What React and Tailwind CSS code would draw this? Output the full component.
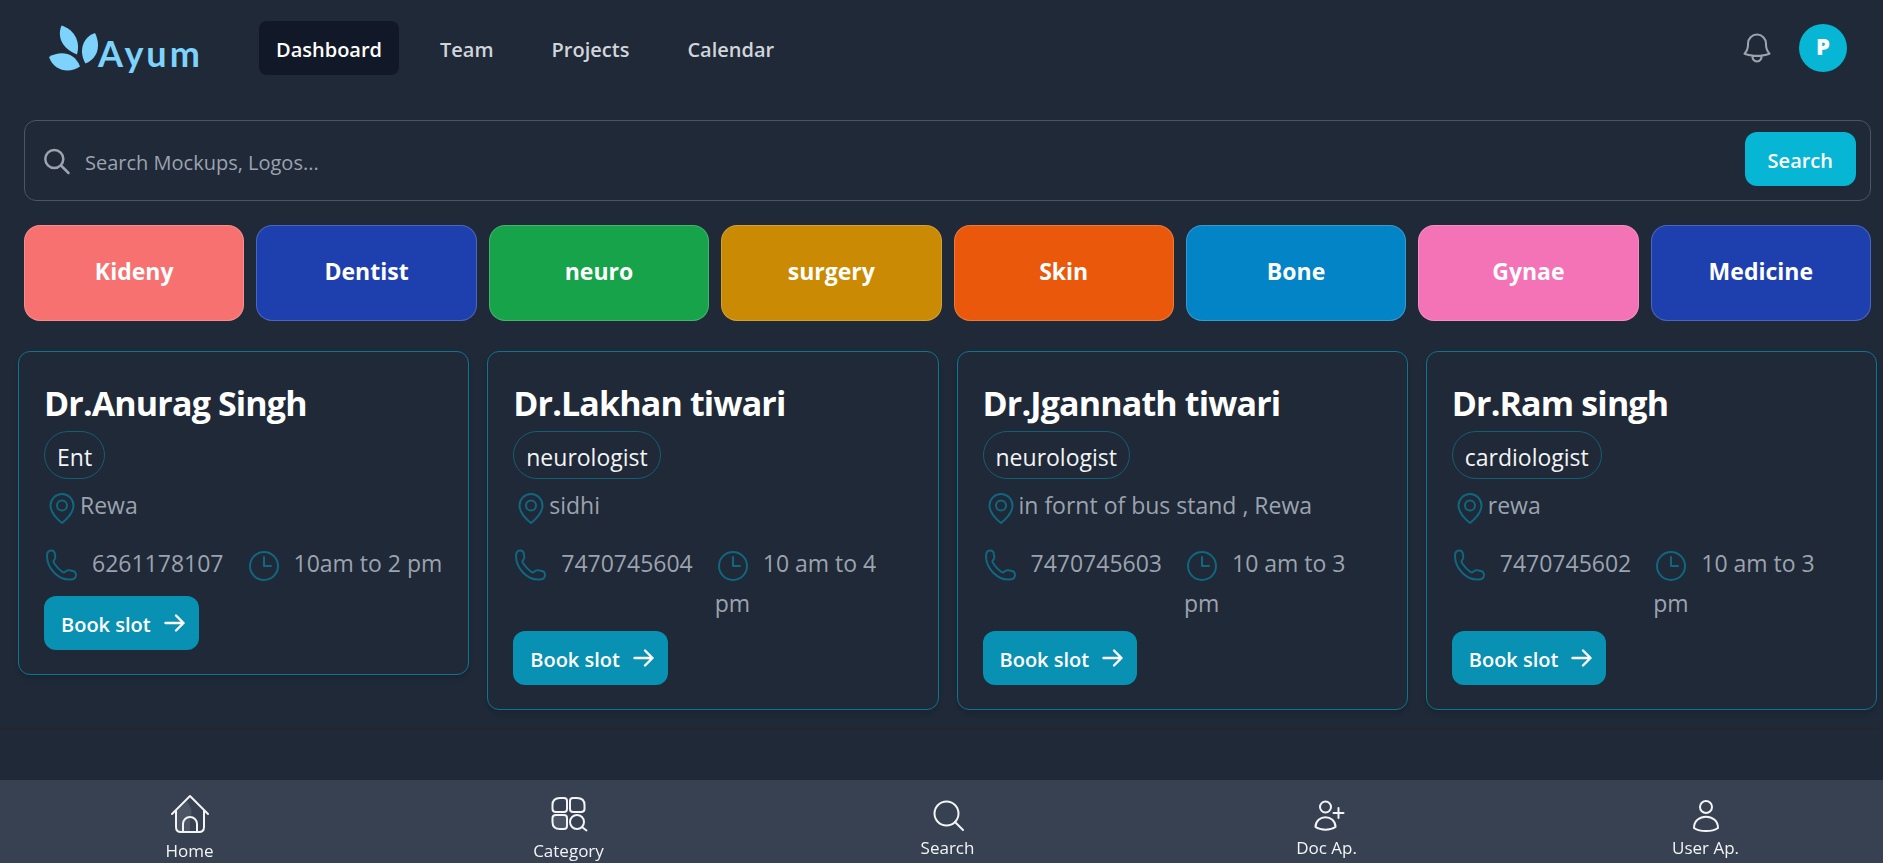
const categories = [
  { name: "Kideny", tone: "bg-[#f87171]" },
  { name: "Dentist", tone: "bg-[#1e40af]" },
  { name: "neuro", tone: "bg-[#16a34a]" },
  { name: "surgery", tone: "bg-[#ca8a04]" },
  { name: "Skin", tone: "bg-[#ea580c]" },
  { name: "Bone", tone: "bg-[#0284c7]" },
  { name: "Gynae", tone: "bg-[#f472b6]" },
  { name: "Medicine", tone: "bg-[#1e40af]" },
];

const doctors = [
  { name: "Dr.Anurag Singh", field: "Ent", place: "Rewa", phone: "6261178107", hours: "10am to 2 pm" },
  { name: "Dr.Lakhan tiwari", field: "neurologist", place: "sidhi", phone: "7470745604", hours: "10 am to 4 pm" },
  { name: "Dr.Jgannath tiwari", field: "neurologist", place: "in fornt of bus stand , Rewa", phone: "7470745603", hours: "10 am to 3 pm" },
  { name: "Dr.Ram singh", field: "cardiologist", place: "rewa", phone: "7470745602", hours: "10 am to 3 pm" },
];

function Svg({ className, children, box = "0 0 36 36", width = 2 }) {
  return (
    <svg
      aria-hidden="true"
      className={className}
      viewBox={box}
      fill="none"
      stroke="currentColor"
      strokeWidth={width}
      strokeLinecap="round"
      strokeLinejoin="round"
    >
      {children}
    </svg>
  );
}

function Logo() {
  return (
    <a href="#home" aria-label="Ayum" className="flex w-[150px] items-end text-[#7dd3fc]">
      <svg aria-hidden="true" className="h-[46px] w-[50px] shrink-0" viewBox="0 0 50 46" fill="currentColor">
        <path d="M12.5 0.5C24 4 32 15 28 29.5C16 25 7 14 12.5 0.5Z" />
        <path d="M46 8C51 18 51 32 36.5 38.5C29 26 34 12 46 8Z" />
        <path d="M0 32C12 25 26 28 31 41.5C20 49 5 46 0 32Z" />
      </svg>
      <span className="-ml-px font-['Lato'] text-[36px] leading-9 font-bold tracking-[3px]">Ayum</span>
    </a>
  );
}

function Header() {
  return (
    <header className="flex h-24 items-center justify-between pr-9 pl-[49px]">
      <div className="flex items-center">
        <Logo />
        <nav className="ml-15 flex gap-6">
          <a href="#dashboard" className="rounded-lg bg-[#111827] px-[17px] pt-3.5 pb-2.5 text-xl leading-[30px] font-semibold text-white">Dashboard</a>
          <a href="#team" className="px-[17px] pt-3.5 pb-2.5 text-xl leading-[30px] font-semibold text-[#d1d5db]">Team</a>
          <a href="#projects" className="px-[17px] pt-3.5 pb-2.5 text-xl leading-[30px] font-semibold text-[#d1d5db]">Projects</a>
          <a href="#calendar" className="px-[17px] pt-3.5 pb-2.5 text-xl leading-[30px] font-semibold text-[#d1d5db]">Calendar</a>
        </nav>
      </div>
      <div className="flex items-center gap-6">
        <button type="button" aria-label="Notifications" className="text-[#9ca3af]">
          <Svg className="size-9" box="0 0 24 24" width={1.4}>
            <path d="M14.857 17.082a23.848 23.848 0 005.454-1.310A8.967 8.967 0 0118 9.750v-.7V9A6 6 0 006 9v.750a8.967 8.967 0 01-2.312 6.022c1.733.640 3.560 1.085 5.455 1.310m5.714 0a24.255 24.255 0 01-5.714 0m5.714 0a3 3 0 11-5.714 0" />
          </Svg>
        </button>
        <button type="button" className="size-12 rounded-full bg-[#06b6d4] pb-1 text-[22px] leading-6 font-extrabold text-white">P</button>
      </div>
    </header>
  );
}

function SearchBar() {
  return (
    <form className="mt-6 flex h-[81px] items-center rounded-xl border border-[#4b5563] pr-3.5 pl-4" onSubmit={(e) => e.preventDefault()}>
      <Svg className="size-8 shrink-0 text-[#9ca3af]" box="0 0 32 32" width={2.5}>
        <circle cx="13.3" cy="14" r="9" />
        <path d="m20 20.5 7.5 7.5" />
      </Svg>
      <input
        type="search"
        aria-label="Search"
        placeholder="Search Mockups, Logos..."
        className="min-w-0 flex-1 bg-transparent pt-1 pl-3 text-xl leading-[30px] text-white outline-none placeholder:text-[#9ca3af]"
      />
      <button type="submit" className="mb-1 rounded-xl bg-[#06b6d4] px-[23px] pt-3.5 pb-2.5 text-xl leading-[30px] font-semibold text-white">Search</button>
    </form>
  );
}

function DoctorCard({ doctor }) {
  return (
    <article className="rounded-xl border border-[#0e7490] px-[25px] py-6 shadow-md">
      <h2 className="text-[34px] leading-[55px] font-bold tracking-tight text-white">{doctor.name}</h2>
      <div className="w-fit rounded-full border border-[#155e75] px-3 pt-2 pb-1 text-[23px] leading-[34px] text-[#f3f4f6]">{doctor.field}</div>
      <p className="mt-2 flex items-center text-[23px] leading-[37px] text-[#9ca3af]">
        <Svg className="size-9 shrink-0 text-[#116780]">
          <path d="M18 35C13 31 6.500 25 6.500 17.500a11.500 11.500 0 0 1 23 0C29.500 25 23 31 18 35Z" />
          <circle cx="18" cy="17.500" r="5" />
        </Svg>
        {doctor.place}
      </p>
      <div className="mt-5 mb-2 flex min-h-11 gap-[22px] text-[23px] leading-[39px] text-[#9ca3af]">
        <p className="shrink-0">
          <Svg className="mr-3 inline size-9 text-[#116780]">
            <path d="M3 8c0-4 1-5.500 4-5.500 3 0 3.500 1 4 4.500.5 2.500 1 3-.5 4.500-1.500 1.500-1.500 2 .5 5 2 3 4 5 7.500 7.500 1.500 1 2 .5 3-.5 1.500-2 2.500-1.500 5-1 3.500.500 5.500 1 5.500 4.500 0 3.500-2 4.500-6 4.500C14 32 3 20 3 8Z" />
          </Svg>
          {doctor.phone}
        </p>
        <p>
          <Svg className="mr-3 inline size-9 text-[#116780]">
            <circle cx="18" cy="18" r="14" />
            <path d="M18 9v9h7" />
          </Svg>
          {doctor.hours}
        </p>
      </div>
      <button type="button" className="flex items-center gap-3 rounded-xl bg-[#0891b2] pt-3.5 pr-3 pb-2.5 pl-[17px] text-xl leading-[30px] font-semibold text-white">
        Book slot
        <Svg className="size-6" box="0 0 24 24" width={2.4}>
          <path d="M2.500 10h18M13 2.500l7.500 7.500-7.500 7.500" />
        </Svg>
      </button>
    </article>
  );
}

const tabs = [
  {
    label: "Home",
    icon: (
      <Svg className="size-[42px]" box="0 0 42 42">
        <path d="M8 17v15q0 5 5 5h8V24c4-6 0-12-3-17Z" fill="#4b5563" stroke="none" />
        <path d="M3 20 21 2l18 18M7 17v16q0 5 5 5h18q5 0 5-5V17M14 38V30a7 7 0 0 1 14 0v8" />
      </Svg>
    ),
  },
  {
    label: "Category",
    icon: (
      <Svg className="size-[42px]" box="0 0 42 42">
        <path d="M12 4h4q3 0 3 3v8q0 3-3 3H8q-3.500 0-3.500-3v-4q0-7 7.500-7Z" />
        <path d="M29 4h-4q-3 0-3 3v8q0 3 3 3h8q3.500 0 3.500-3v-4q0-7-7.500-7Z" />
        <path d="M12 35h4q3 0 3-3v-8q0-3-3-3H8q-3.500 0-3.500 3v4q0 7 7.500 7Z" fill="#4b5563" />
        <circle cx="29" cy="28" r="7" />
        <path d="m34 33 4.500 3.500" />
      </Svg>
    ),
  },
  {
    label: "Search",
    icon: (
      <Svg className="size-9">
        <circle cx="16.500" cy="16.500" r="12" />
        <path d="m25 25 8 8" />
      </Svg>
    ),
  },
  {
    label: "Doc Ap.",
    icon: (
      <Svg className="size-9">
        <circle cx="16.5" cy="10" r="5.500" />
        <path d="M6.500 30c0-13 20-13 20 0-5 3.500-15 3.500-20 0ZM29.500 11v10M24.500 16h10" />
      </Svg>
    ),
  },
  {
    label: "User Ap.",
    icon: (
      <Svg className="size-9">
        <circle cx="18" cy="10" r="6" />
        <path d="M6 31c0-15 24-15 24 0-6 4-18 4-24 0Z" />
      </Svg>
    ),
  },
];

function BottomBar() {
  return (
    <nav className="fixed -right-3 bottom-0 left-0 grid h-[83px] grid-cols-5 bg-[#374151] pt-3.5">
      {tabs.map((tab) => (
        <a key={tab.label} href={"#" + tab.label} className="flex flex-col items-center justify-center text-[17px] leading-[30px] text-[#f3f4f6]">
          {tab.icon}
          {tab.label}
        </a>
      ))}
    </nav>
  );
}

export default function App() {
  return (
    <div className="min-h-screen bg-[#1f2937] font-['Open_Sans',sans-serif]">
      <Header />
      <main>
        <div className="pr-3 pl-6">
          <SearchBar />
          <div className="mt-6 grid grid-cols-8 gap-3">
            {categories.map((c) => (
              <button key={c.name} type="button" className={"h-24 rounded-2xl border border-white/20 pb-1 text-[23px] font-bold text-white " + c.tone}>
                {c.name}
              </button>
            ))}
          </div>
        </div>
        <section className="mt-[30px] grid grid-cols-4 items-start gap-[18px] border-b border-[#292524] pr-1.5 pb-[18px] pl-[18px]">
          {doctors.map((d) => (
            <DoctorCard key={d.name} doctor={d} />
          ))}
        </section>
      </main>
      <BottomBar />
    </div>
  );
}
